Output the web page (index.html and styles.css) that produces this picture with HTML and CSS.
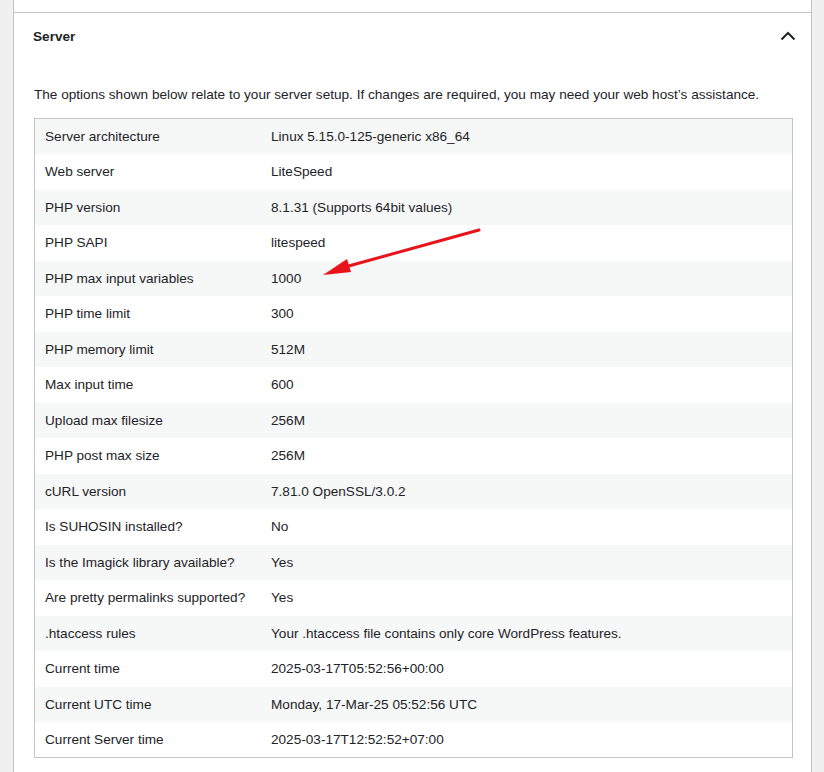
FILE: index.html
```html
<!DOCTYPE html>
<html>
<head>
<meta charset="utf-8">
<link rel="stylesheet" href="styles.css">
</head>
<body>
<div class="panel">
  <div class="prev"></div>
  <div class="section">
    <div class="head">
      <h3 class="title">Server</h3>
      <svg class="chev" width="16" height="12" viewBox="0 0 16 12"><path d="M1.5 9.5 L8 3 L14.5 9.5" fill="none" stroke="#1d2327" stroke-width="2"/></svg>
    </div>
    <div class="body">
      <p class="desc">The options shown below relate to your server setup. If changes are required, you may need your web host’s assistance.</p>
      <table class="info">
        <tr><td>Server architecture</td><td>Linux 5.15.0-125-generic x86_64</td></tr>
        <tr><td>Web server</td><td>LiteSpeed</td></tr>
        <tr><td>PHP version</td><td>8.1.31 (Supports 64bit values)</td></tr>
        <tr><td>PHP SAPI</td><td>litespeed</td></tr>
        <tr><td>PHP max input variables</td><td>1000</td></tr>
        <tr><td>PHP time limit</td><td>300</td></tr>
        <tr><td>PHP memory limit</td><td>512M</td></tr>
        <tr><td>Max input time</td><td>600</td></tr>
        <tr><td>Upload max filesize</td><td>256M</td></tr>
        <tr><td>PHP post max size</td><td>256M</td></tr>
        <tr><td>cURL version</td><td>7.81.0 OpenSSL/3.0.2</td></tr>
        <tr><td>Is SUHOSIN installed?</td><td>No</td></tr>
        <tr><td>Is the Imagick library available?</td><td>Yes</td></tr>
        <tr><td>Are pretty permalinks supported?</td><td>Yes</td></tr>
        <tr><td>.htaccess rules</td><td>Your .htaccess file contains only core WordPress features.</td></tr>
        <tr><td>Current time</td><td>2025-03-17T05:52:56+00:00</td></tr>
        <tr><td>Current UTC time</td><td>Monday, 17-Mar-25 05:52:56 UTC</td></tr>
        <tr><td>Current Server time</td><td>2025-03-17T12:52:52+07:00</td></tr>
      </table>
    </div>
  </div>
</div>
<svg class="arrow" width="824" height="772" viewBox="0 0 824 772">
  <line x1="479" y1="230" x2="345" y2="267" stroke="#e8141b" stroke-width="3" stroke-linecap="round"/>
  <polygon points="323,275 347,259 351,272" fill="#e8141b"/>
</svg>
</body>
</html>
```
FILE: styles.css
```css
html, body {
  margin: 0;
  padding: 0;
  background: #f0f0f1;
  height: 772px;
  overflow: hidden;
}
body {
  position: relative;
  font-family: "Liberation Sans", Arial, sans-serif;
  color: #1d2327;
  font-size: 13.6px;
}
.panel {
  margin-left: 13px;
  width: 797px;
  background: #fff;
  border-left: 1px solid #c3c4c7;
  border-right: 1px solid #c3c4c7;
  height: 800px;
}
.prev {
  height: 12px;
  border-bottom: 1px solid #c3c4c7;
}
.head {
  height: 46px;
  display: flex;
  align-items: center;
  justify-content: space-between;
  padding: 0 15px 0 19px;
}
.title {
  margin: 0;
  font-size: 13.6px;
  font-weight: bold;
}
.chev {
  display: block;
}
.body {
  padding: 0 18px 0 20px;
}
.desc {
  margin: 26px 0 13px;
  line-height: 20px;
  white-space: nowrap;
}
.info {
  width: 759px;
  border: 1px solid #c3c4c7;
  border-collapse: collapse;
  table-layout: fixed;
}
.info tr {
  height: 35.5px;
}
.info tr:nth-child(odd) {
  background: #f6f7f7;
}
.info td {
  padding: 0 10px;
  vertical-align: middle;
  white-space: nowrap;
}
.info td:first-child {
  width: 206px;
}
.arrow {
  position: absolute;
  left: 0;
  top: 0;
  pointer-events: none;
}
```
